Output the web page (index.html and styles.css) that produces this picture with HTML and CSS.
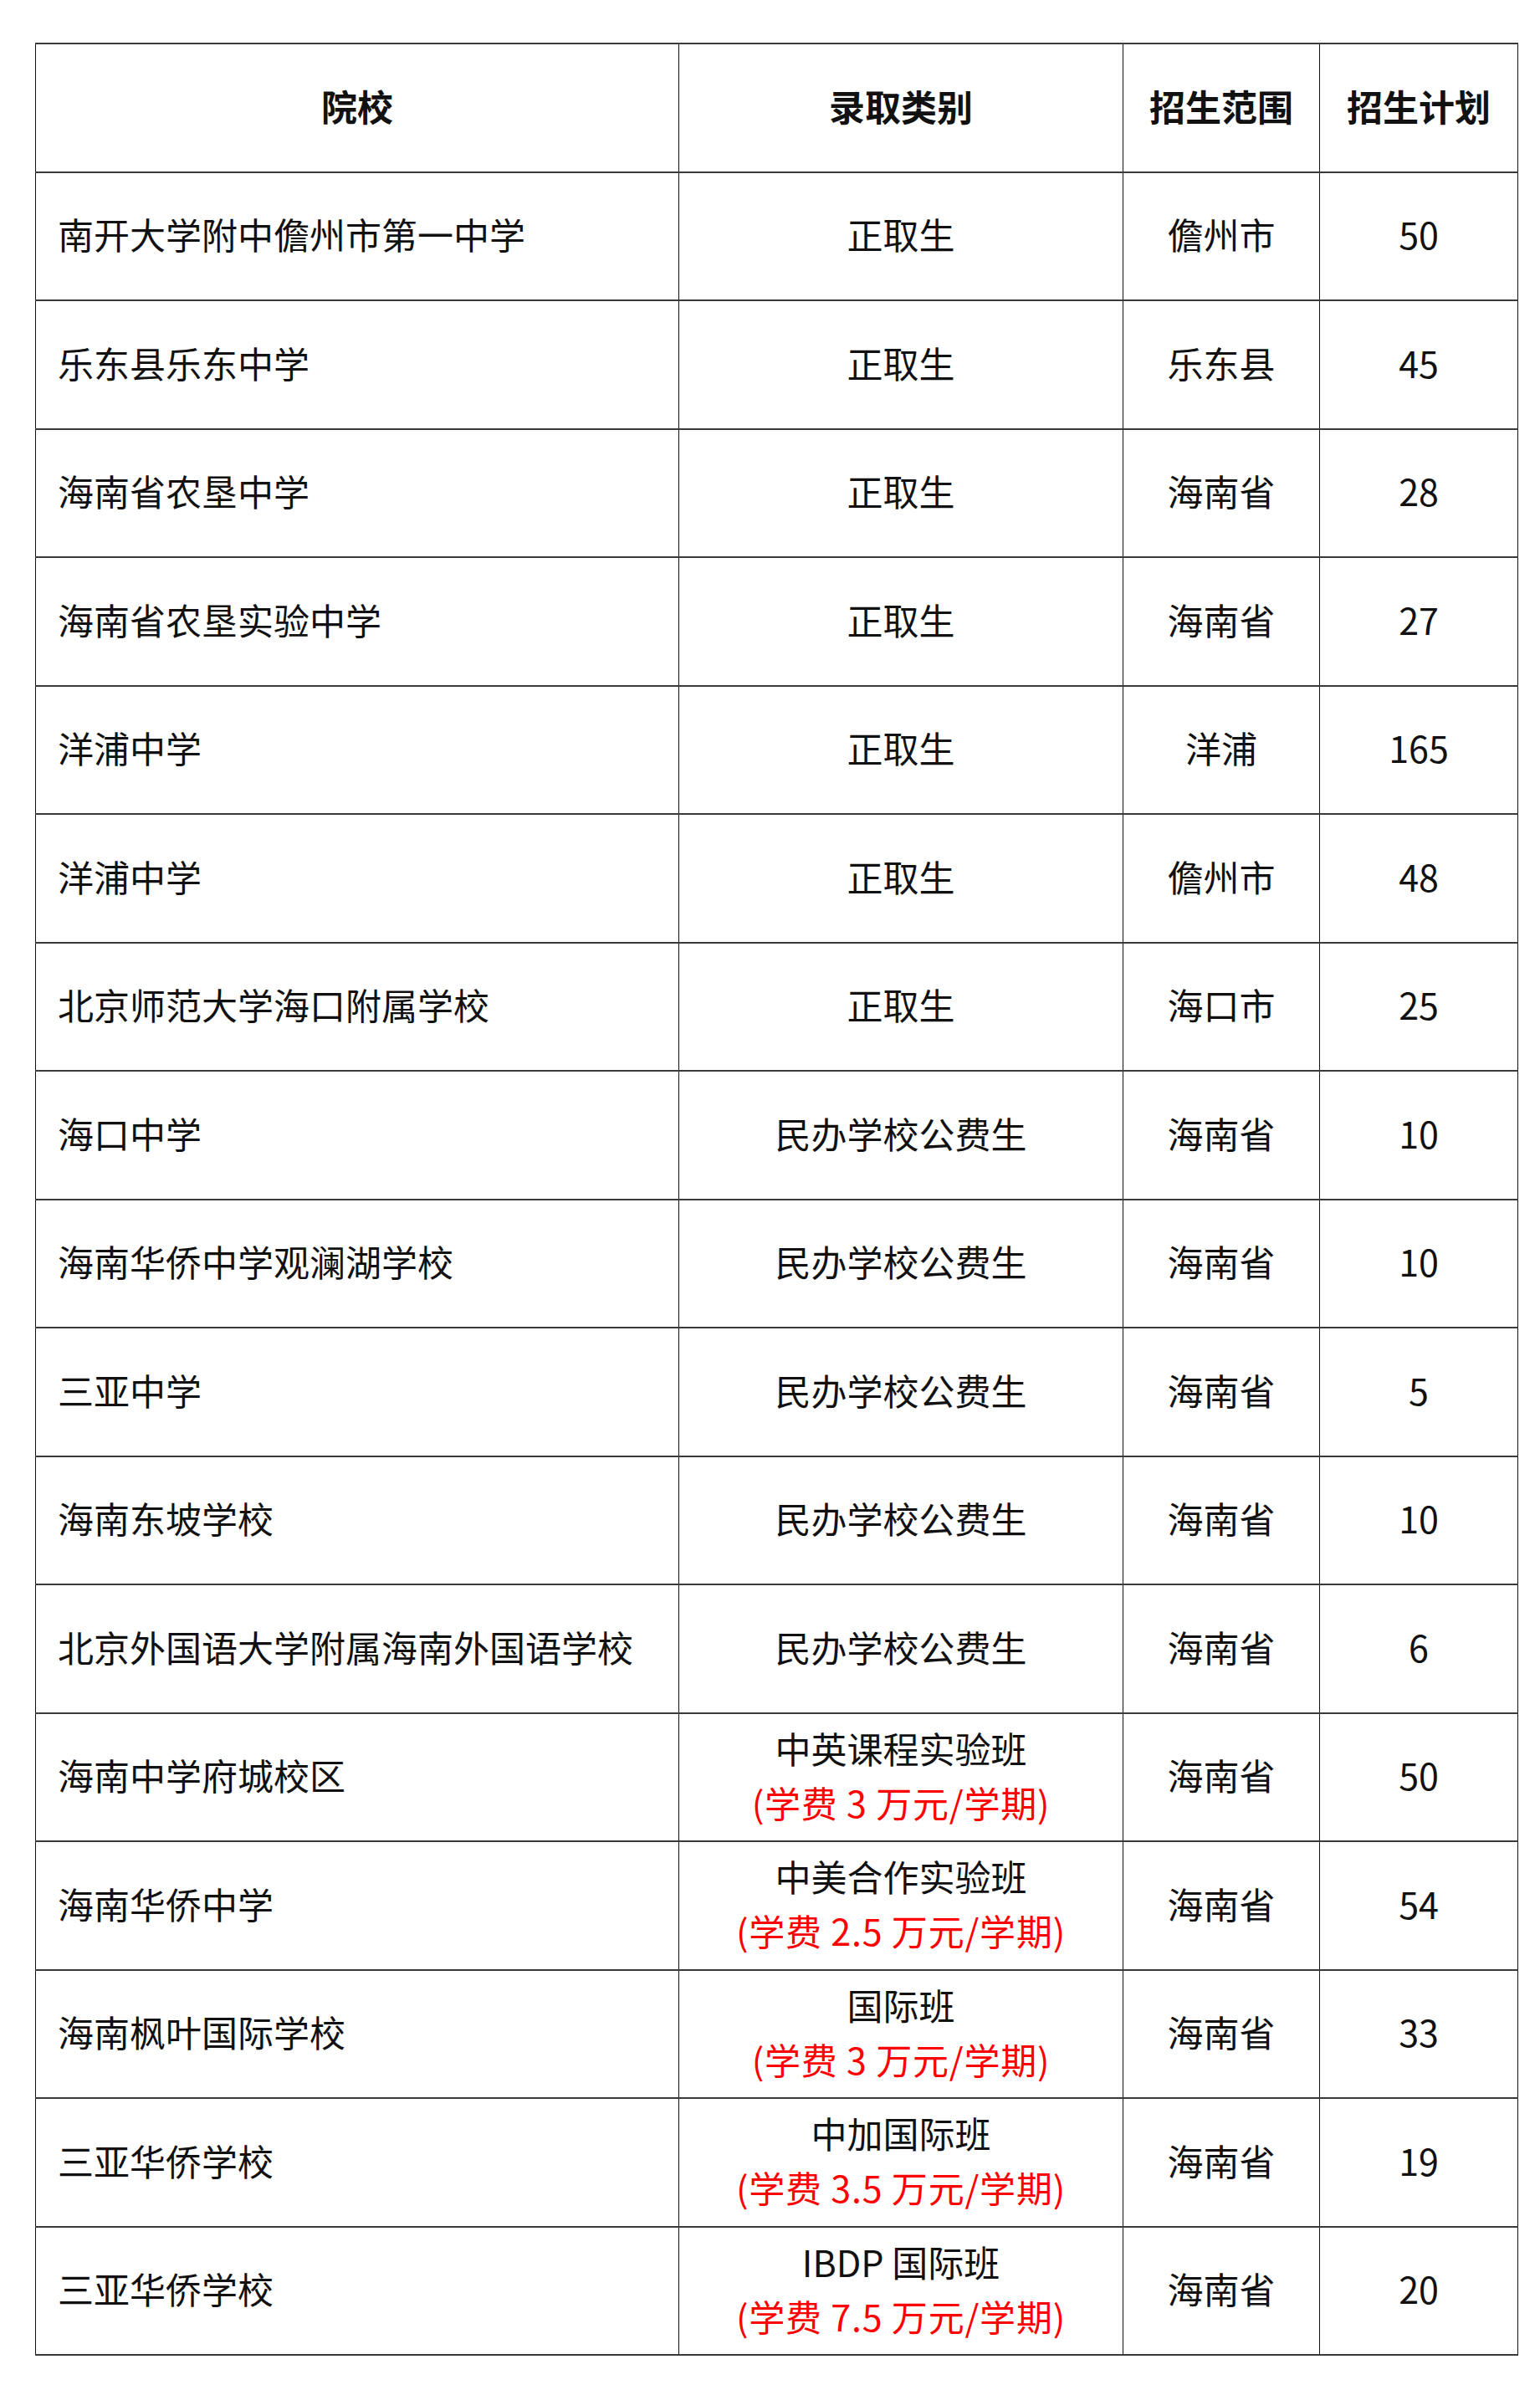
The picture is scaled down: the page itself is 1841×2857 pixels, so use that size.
FILE: index.html
```html
<!DOCTYPE html>
<html lang="zh-CN">
<head>
<meta charset="utf-8">
<title>招生计划</title>
<link rel="stylesheet" href="styles.css">
</head>
<body>
<table class="plan">
  <colgroup>
    <col class="c-school">
    <col class="c-type">
    <col class="c-range">
    <col class="c-num">
  </colgroup>
  <thead>
    <tr><th>院校</th><th>录取类别</th><th>招生范围</th><th>招生计划</th></tr>
  </thead>
  <tbody>
    <tr><td class="name">南开大学附中儋州市第一中学</td><td>正取生</td><td>儋州市</td><td>50</td></tr>
    <tr><td class="name">乐东县乐东中学</td><td>正取生</td><td>乐东县</td><td>45</td></tr>
    <tr><td class="name">海南省农垦中学</td><td>正取生</td><td>海南省</td><td>28</td></tr>
    <tr><td class="name">海南省农垦实验中学</td><td>正取生</td><td>海南省</td><td>27</td></tr>
    <tr><td class="name">洋浦中学</td><td>正取生</td><td>洋浦</td><td>165</td></tr>
    <tr><td class="name">洋浦中学</td><td>正取生</td><td>儋州市</td><td>48</td></tr>
    <tr><td class="name">北京师范大学海口附属学校</td><td>正取生</td><td>海口市</td><td>25</td></tr>
    <tr><td class="name">海口中学</td><td>民办学校公费生</td><td>海南省</td><td>10</td></tr>
    <tr><td class="name">海南华侨中学观澜湖学校</td><td>民办学校公费生</td><td>海南省</td><td>10</td></tr>
    <tr><td class="name">三亚中学</td><td>民办学校公费生</td><td>海南省</td><td>5</td></tr>
    <tr><td class="name">海南东坡学校</td><td>民办学校公费生</td><td>海南省</td><td>10</td></tr>
    <tr><td class="name">北京外国语大学附属海南外国语学校</td><td>民办学校公费生</td><td>海南省</td><td>6</td></tr>
    <tr><td class="name">海南中学府城校区</td><td>中英课程实验班<br><span class="fee">(学费 3 万元/学期)</span></td><td>海南省</td><td>50</td></tr>
    <tr><td class="name">海南华侨中学</td><td>中美合作实验班<br><span class="fee">(学费 2.5 万元/学期)</span></td><td>海南省</td><td>54</td></tr>
    <tr><td class="name">海南枫叶国际学校</td><td>国际班<br><span class="fee">(学费 3 万元/学期)</span></td><td>海南省</td><td>33</td></tr>
    <tr><td class="name">三亚华侨学校</td><td>中加国际班<br><span class="fee">(学费 3.5 万元/学期)</span></td><td>海南省</td><td>19</td></tr>
    <tr><td class="name">三亚华侨学校</td><td>IBDP 国际班<br><span class="fee">(学费 7.5 万元/学期)</span></td><td>海南省</td><td>20</td></tr>
  </tbody>
</table>
</body>
</html>
```

FILE: styles.css
```css
html, body {
  background: #ffffff;
}
body {
  margin: 0;
  padding: 51px 0 0 42px;
  font-family: "Noto Sans CJK SC", "Noto Sans", sans-serif;
  color: #111111;
}
.plan {
  border-collapse: collapse;
  table-layout: fixed;
  width: 1772px;
}
.c-school { width: 769px; }
.c-type { width: 531px; }
.c-range { width: 235px; }
.c-num { width: 237px; }
.plan th,
.plan td {
  border-top: 2px solid #3a3a3a;
  border-bottom: 2px solid #3a3a3a;
  border-left: 1px solid #111111;
  border-right: 1px solid #111111;
  height: 146.5px;
  padding: 0 0 5px 0;
  text-align: center;
  vertical-align: middle;
  font-size: 43px;
  line-height: 65px;
  font-weight: 400;
}
.plan th {
  font-weight: 700;
}
.plan td.name {
  text-align: left;
  padding-left: 26px;
}
.fee {
  color: #ff0000;
  letter-spacing: 0.8px;
}
```
